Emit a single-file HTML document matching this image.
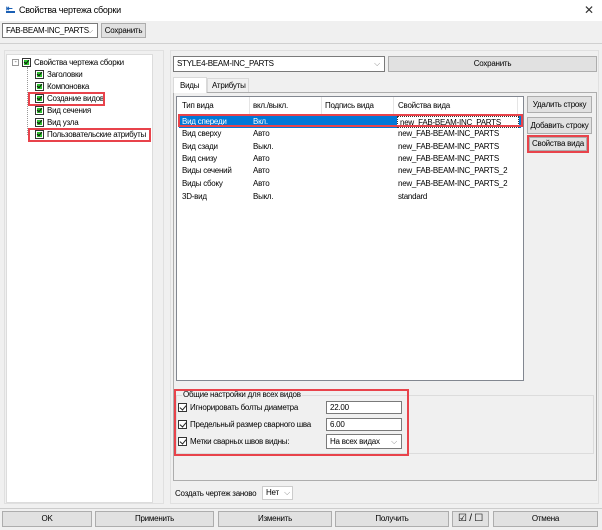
<!DOCTYPE html>
<html><head><meta charset="utf-8"><style>
*{box-sizing:border-box;margin:0;padding:0;white-space:nowrap}
body{width:602px;height:530px;background:#f0f0f0;font-family:"Liberation Sans",sans-serif;font-size:8px;letter-spacing:-0.25px;color:#000;position:relative;overflow:hidden}
.a{position:absolute}
.btn{position:absolute;background:#e1e1e1;border:1px solid #adadad;text-align:center;font-size:8px}
.red{position:absolute;border:2px solid #e8434b}
.cb{position:absolute;width:9px;height:9px;border:1px solid #333;background:#fff}
.cb:after{content:"";position:absolute;left:2px;top:0px;width:3px;height:5px;border:solid #222;border-width:0 1px 1px 0;transform:rotate(40deg)}
.gcb{position:absolute;width:9px;height:9px;border:1px solid #333;background:#fff}
.gcb:after{content:"";position:absolute;left:1px;top:1px;width:5px;height:5px;background:#2ec22e}
.gcb:before{content:"";position:absolute;left:2px;top:0;width:2px;height:4px;border:solid #111;border-width:0 1px 1px 0;transform:rotate(40deg);z-index:2}
.inp{position:absolute;background:#fff;border:1px solid #7a7a7a;padding-left:3px}
.chev{position:absolute;right:4px;color:#888;font-size:8px}
.tr{position:absolute;left:0;width:100%;height:12px}
.tr span{position:absolute}
</style></head><body>
<div class="a" style="left:0;top:0;width:602px;height:21px;background:#fff"></div>
<div class="a" style="left:6px;top:6px;width:9px;height:7px;border-bottom:2px solid #1a5fb4"></div>
<div class="a" style="left:6px;top:4px;color:#1a5fb4;font-size:8px;font-weight:bold">⇤</div>
<div class="a" style="left:19px;top:5px;font-size:9px">Свойства чертежа сборки</div>
<div class="a" style="left:584px;top:3px;font-size:12px;color:#333">✕</div>
<div class="inp" style="left:2px;top:23px;width:96px;height:15px;line-height:13px">FAB-BEAM-INC_PARTS<span class="chev">⌵</span></div>
<div class="btn" style="left:101px;top:23px;width:45px;height:15px;line-height:13px">Сохранить</div>
<div class="a" style="left:0;top:43px;width:602px;height:1px;background:#d0d0d0"></div>
<div class="a" style="left:4px;top:50px;width:160px;height:454px;border:1px solid #e0e0e0"></div>
<div class="a" style="left:6px;top:54px;width:147px;height:449px;background:#fff;border:1px solid #dcdcdc"></div>
<div class="a" style="left:12px;top:59px;width:7px;height:7px;border:1px solid #999;font-size:7px;line-height:5px;text-align:center;color:#555">-</div>
<div class="a" style="left:27px;top:67px;height:68px;border-left:1px dotted #999"></div>
<div class="gcb" style="left:22px;top:58px"></div><div class="a" style="left:34px;top:58px">Свойства чертежа сборки</div>
<div class="gcb" style="left:35px;top:70px"></div><div class="a" style="left:47px;top:70px">Заголовки</div>
<div class="gcb" style="left:35px;top:82px"></div><div class="a" style="left:47px;top:82px">Компоновка</div>
<div class="gcb" style="left:35px;top:94px"></div><div class="a" style="left:47px;top:94px">Создание видов</div>
<div class="gcb" style="left:35px;top:106px"></div><div class="a" style="left:47px;top:106px">Вид сечения</div>
<div class="gcb" style="left:35px;top:118px"></div><div class="a" style="left:47px;top:118px">Вид узла</div>
<div class="gcb" style="left:35px;top:130px"></div><div class="a" style="left:47px;top:130px">Пользовательские атрибуты</div>
<div class="red" style="left:28px;top:92px;width:77px;height:14px"></div>
<div class="red" style="left:28px;top:128px;width:123px;height:14px"></div>
<div class="a" style="left:170px;top:50px;width:429px;height:454px;border:1px solid #e0e0e0"></div>
<div class="inp" style="left:173px;top:56px;width:212px;height:16px;line-height:14px">STYLE4-BEAM-INC_PARTS<span class="chev">⌵</span></div>
<div class="btn" style="left:388px;top:56px;width:209px;height:16px;line-height:14px">Сохранить</div>
<div class="a" style="left:173px;top:92px;width:424px;height:389px;border:1px solid #adadad"></div>
<div class="a" style="left:173px;top:77px;width:34px;height:16px;background:#fff;border:1px solid #d9d9d9;border-bottom:none;padding:3px 0 0 6px">Виды</div>
<div class="a" style="left:207px;top:78px;width:42px;height:14px;border:1px solid #d9d9d9;border-bottom:none;padding:2px 0 0 4px">Атрибуты</div>
<div class="a" style="left:176px;top:96px;width:348px;height:285px;background:#fff;border:1px solid #828790">
 <div class="tr" style="top:4px;height:13px"><span style="left:5px">Тип вида</span><span style="left:76px">вкл./выкл.</span><span style="left:148px">Подпись вида</span><span style="left:221px">Свойства вида</span></div>
 <div class="a" style="left:72px;top:0;width:1px;height:17px;background:#e5e5e5"></div>
 <div class="a" style="left:144px;top:0;width:1px;height:17px;background:#e5e5e5"></div>
 <div class="a" style="left:216px;top:0;width:1px;height:17px;background:#e5e5e5"></div>
 <div class="a" style="left:340px;top:0;width:1px;height:17px;background:#e5e5e5"></div>
 <div class="tr" style="top:19px;background:#0078d7;color:#fff;width:342px;left:2px"><span style="left:3px;top:1px">Вид спереди</span><span style="left:74px;top:1px">Вкл.</span><span style="left:218px;top:0;width:122px;height:12px;background:#fff;color:#000;padding:1px 0 0 2px;border:1px dotted #333">new_FAB-BEAM-INC_PARTS</span></div>
 <div class="tr" style="top:32px"><span style="left:5px">Вид сверху</span><span style="left:76px">Авто</span><span style="left:221px">new_FAB-BEAM-INC_PARTS</span></div>
 <div class="tr" style="top:45px"><span style="left:5px">Вид сзади</span><span style="left:76px">Выкл.</span><span style="left:221px">new_FAB-BEAM-INC_PARTS</span></div>
 <div class="tr" style="top:57px"><span style="left:5px">Вид снизу</span><span style="left:76px">Авто</span><span style="left:221px">new_FAB-BEAM-INC_PARTS</span></div>
 <div class="tr" style="top:69px"><span style="left:5px">Виды сечений</span><span style="left:76px">Авто</span><span style="left:221px">new_FAB-BEAM-INC_PARTS_2</span></div>
 <div class="tr" style="top:82px"><span style="left:5px">Виды сбоку</span><span style="left:76px">Авто</span><span style="left:221px">new_FAB-BEAM-INC_PARTS_2</span></div>
 <div class="tr" style="top:95px"><span style="left:5px">3D-вид</span><span style="left:76px">Выкл.</span><span style="left:221px">standard</span></div>
</div>
<div class="red" style="left:178px;top:114px;width:345px;height:13px"></div>
<div class="btn" style="left:527px;top:96px;width:65px;height:17px;line-height:15px">Удалить строку</div>
<div class="btn" style="left:527px;top:117px;width:65px;height:17px;line-height:15px">Добавить строку</div>
<div class="btn" style="left:529px;top:137px;width:58px;height:14px;line-height:12px">Свойства вида</div>
<div class="red" style="left:527px;top:135px;width:62px;height:18px"></div>
<div class="a" style="left:176px;top:395px;width:418px;height:59px;border:1px solid #dcdcdc"></div>
<div class="a" style="left:182px;top:390px;background:#f0f0f0;padding:0 1px">Общие настройки для всех видов</div>
<div class="cb" style="left:178px;top:403px"></div><div class="a" style="left:190px;top:403px">Игнорировать болты диаметра</div>
<div class="inp" style="left:326px;top:401px;width:76px;height:13px;line-height:11px">22.00</div>
<div class="cb" style="left:178px;top:420px"></div><div class="a" style="left:190px;top:420px">Предельный размер сварного шва</div>
<div class="inp" style="left:326px;top:418px;width:76px;height:13px;line-height:11px">6.00</div>
<div class="cb" style="left:178px;top:437px"></div><div class="a" style="left:190px;top:437px">Метки сварных швов видны:</div>
<div class="inp" style="left:326px;top:434px;width:76px;height:15px;line-height:13px">На всех видах<span class="chev">⌵</span></div>
<div class="red" style="left:174px;top:389px;width:235px;height:67px"></div>
<div class="a" style="left:175px;top:489px">Создать чертеж заново</div>
<div class="inp" style="left:262px;top:486px;width:31px;height:14px;line-height:12px;border-color:#ccc">Нет<span class="chev" style="right:2px">⌵</span></div>
<div class="a" style="left:0;top:508px;width:602px;height:1px;background:#ccc"></div>
<div class="btn" style="left:2px;top:511px;width:90px;height:16px;line-height:14px">OK</div>
<div class="btn" style="left:95px;top:511px;width:119px;height:16px;line-height:14px">Применить</div>
<div class="btn" style="left:218px;top:511px;width:114px;height:16px;line-height:14px">Изменить</div>
<div class="btn" style="left:335px;top:511px;width:114px;height:16px;line-height:14px">Получить</div>
<div class="btn" style="left:452px;top:511px;width:37px;height:16px;line-height:14px;font-size:10px">☑ / ☐</div>
<div class="btn" style="left:493px;top:511px;width:105px;height:16px;line-height:14px">Отмена</div>
</body></html>
